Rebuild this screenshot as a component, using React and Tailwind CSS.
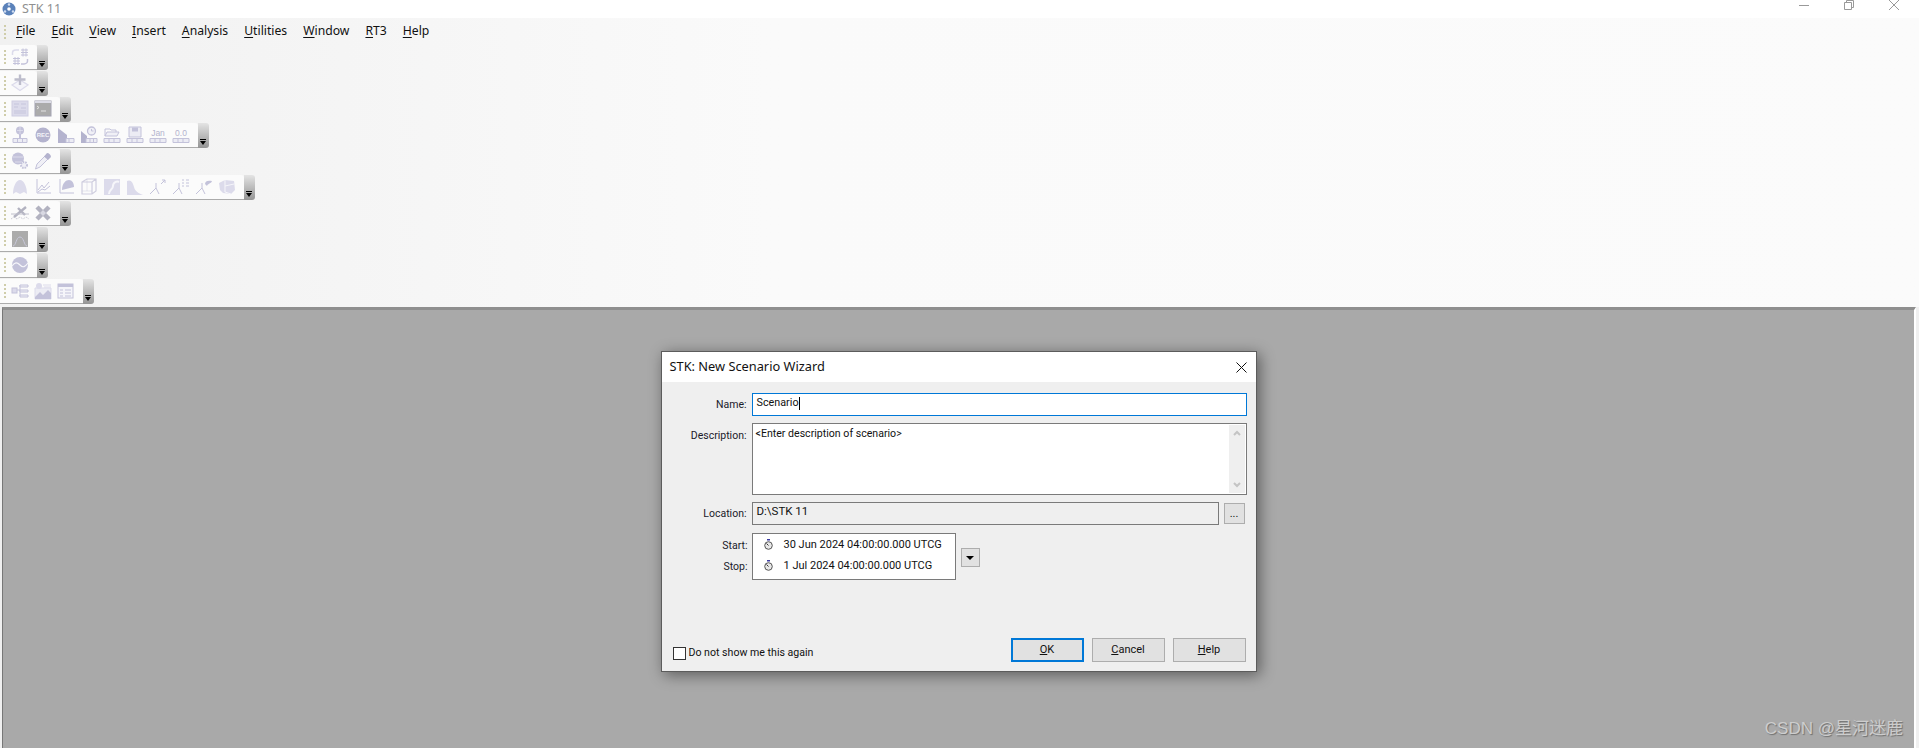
import React from 'react';

const MENUS = [
  ['F', 'ile'], ['E', 'dit'], ['V', 'iew'], ['I', 'nsert'], ['A', 'nalysis'],
  ['U', 'tilities'], ['W', 'indow'], ['R', 'T3'], ['H', 'elp'],
];

const C = '#c3c2da';
const D = '#dcdbeb';
const G = '#b4b3ce';

// toolbar glyphs, all drawn disabled
const ICONS = {
  swap: <g><path d="M1.5 7V4.5C1.5 3 3 2 5 2h3" fill="none" stroke={D} strokeWidth="1.5" /><path d="M16.5 11v2c0 1.500-1.500 3-3.500 3H10" fill="none" stroke={C} strokeWidth="1.500" /><path d="M10 2h7M10 4.500h7M10 7h7M12 0.500v8M15 0.500v8M2 10.500h7M2 13h7M2 15.500h7M4 9v8M7 9v8" stroke={C} /></g>,
  add: <g><path d="M1 11l8-5 8 5-8 5.500z" fill="#f5f5fa" stroke={D} strokeWidth="1.300" /><path d="M9 0.500v10.500M3.500 5.500h11" stroke="#bdbdcc" strokeWidth="2.400" /></g>,
  report: <g><rect x="1" y="1" width="16" height="15" fill={D} stroke="#cfcee2" /><path d="M3 4h5M3 7h4M10 4h5M10 8h5M3 11h12M3 13h12" stroke="#c6c5dc" /></g>,
  terminal: <g><rect x="1" y="1" width="16" height="15" fill="#ababab" stroke="#a4a4b4" /><rect x="1" y="1" width="16" height="2" fill="#dcdce6" /><path d="M3 6l2 1.500-2 1.500M7 11h5" stroke="#e4e4e4" fill="none" /></g>,
  station: <g><circle cx="9" cy="4.500" r="4" fill={C} /><path d="M6 4.500h6M9 1v7" stroke="#e4e4f0" strokeWidth="0.700" /><path d="M9 8v4" stroke={C} strokeWidth="2" /><path d="M2 12.500h14v4H2zM6.500 12.500v4M11.500 12.500v4" fill="#ececf4" stroke={C} /></g>,
  rec: <g><circle cx="9" cy="9" r="7.500" fill={G} /><text x="9" y="11" textAnchor="middle" fontSize="6" fontWeight="700" fill="#f4f4f8" fontFamily="Liberation Sans, sans-serif">REC</text></g>,
  play: <g><path d="M1 2l9 7v8H1z" fill={G} /><path d="M9 12.500h8v4H9zM12 12.500v4" fill="#ececf4" stroke={C} /></g>,
  clock: <g><path d="M1 5l6 5v7H1z" fill={G} /><circle cx="11.500" cy="5" r="4" fill="#f0f0f6" stroke={C} strokeWidth="1.300" /><path d="M11.500 3v2h2" stroke={C} fill="none" /><path d="M6 12.500h11v4H6zM10 12.500v4M13.500 12.500v4" fill="#ececf4" stroke={C} /></g>,
  folder: <g><path d="M2 10V3h5l1 1h5v2" fill="none" stroke={C} /><path d="M2 10l2-4h12l-2 4z" fill="#f0f0f6" stroke={C} /><path d="M1 12.500h16v4H1zM6 12.500v4M11 12.500v4" fill="#ececf4" stroke={C} /></g>,
  disk: <g><path d="M3 1h12v10H3z" fill="#ececf4" stroke={C} /><path d="M6 1.500h6v4H6z" fill={C} /><path d="M1 12.500h16v4H1zM6 12.500v4M11 12.500v4" fill="#ececf4" stroke={C} /></g>,
  jan: <g><text x="9" y="9.500" textAnchor="middle" fontSize="8.500" fill={G} fontFamily="Liberation Sans, sans-serif">Jan</text><path d="M1 12.500h16v4H1zM6 12.500v4M11 12.500v4" fill="#ececf4" stroke={C} /></g>,
  zero: <g><text x="9" y="9.500" textAnchor="middle" fontSize="8.500" fill={G} fontFamily="Liberation Sans, sans-serif">0.0</text><path d="M1 12.500h16v4H1zM6 12.500v4M11 12.500v4" fill="#ececf4" stroke={C} /></g>,
  gear: <g><circle cx="7" cy="6.500" r="6" fill={C} /><path d="M2 5h10M4 10h7" stroke={D} /><circle cx="13" cy="13" r="3" fill="#f0f0f6" stroke={C} strokeWidth="2" strokeDasharray="1.500 1" /></g>,
  pencil: <g><path d="M1.500 17l1.500-5 8-8 3 3-8 8z" fill="#f0f0f6" stroke={C} /><path d="M10 4.500l3-3.500c2 0 4 2 4 4l-3 3z" fill={G} /></g>,
  dome: <g><path d="M2 16C2 9 5 2 9 2s7 7 7 14l-3-2-4 2-4-2z" fill={D} /></g>,
  graph: <g fill="none" stroke={C}><path d="M3 1v14h14" /><path d="M4 12l4-5 2 3 5-6M4 14l4-3 3 1 5-4" /></g>,
  graphDome: <g><path d="M5 12C5 5 9 2 12 2s5 3 5 7z" fill={C} /><path d="M3 1v14h14" stroke={C} fill="none" /></g>,
  cube: <g fill="none" stroke="#cfcedf" strokeWidth="1.200"><path d="M2 4l5-3h9v12l-4 3H2zM2 4h10v12M12 4l4-3" /><path d="M7 1v12H2M7 13h5" strokeWidth="0.500" /></g>,
  map: <g><rect x="1" y="1" width="16" height="16" fill={D} /><path d="M6 16c0-5 4-4 4-8s4-5 6-4" stroke="#f6f6fa" fill="none" strokeWidth="2" /></g>,
  bell: <g><path d="M1 17V3c4-2 6 2 7 6s4 6 9 8z" fill={D} /></g>,
  angle1: <g fill="none" stroke={C}><path d="M1 16l6-6 3 6M7 10V5" /><path d="M12 6l4-4M13 2h3v3" /></g>,
  angle2: <g fill="none" stroke={C}><path d="M1 16l6-6 3 6M7 10V5" /><path d="M10 2h2M14 2h3M10 5h2M14 5h3M10 8h2M14 8h3" /></g>,
  angle3: <g><path d="M1 16l6-6 3 6M7 10V5" fill="none" stroke={C} /><path d="M10 6c0-3 3-4 7-3-1 3-4 2-5 5z" fill={C} /></g>,
  book: <g><path d="M1 5l6-3 9 1 1 9-4 4-8-1-3-3z" fill={D} /><path d="M7 2v12l6 2M7 8l9-2" stroke="#f6f6fa" fill="none" /></g>,
  satWave: <g><path d="M3 13L15 3M7 4l7 7" stroke="#b2b2c0" strokeWidth="2.400" /><path d="M0 10h18" stroke="#c0c0cc" /><path d="M0 15l3-2 3 2 3-2 3 2 3-2 3 2" stroke="#c0c0cc" fill="none" strokeDasharray="1 1" /></g>,
  sat: <g><path d="M3 3l12 12M15 3L3 15" stroke="#b2b2c0" strokeWidth="4.500" /><path d="M9 6l3 3-3 3-3-3z" fill="#d8d8e2" /></g>,
  chart: <g><rect x="1" y="1" width="16" height="16" fill="#ababab" /><path d="M2 16c3 0 3-9 7-9s4 9 7 9" stroke="#c8c8da" fill="none" /></g>,
  wave: <g><circle cx="9" cy="9" r="8" fill={C} /><path d="M1 10c3-4 5-4 8-1s5 2 8-2" stroke="#f6f6fa" fill="none" strokeWidth="1.200" /></g>,
  tree: <g fill="none" stroke={C}><rect x="1" y="6" width="5" height="5" fill={D} /><path d="M6 8h3M9 3v11" /><path d="M9 3h8v2H9zM9 8h8v2H9zM9 13h8v2H9z" fill="#f0f0f6" /></g>,
  image: <g><path d="M1 6h16v11H1z" fill="#ececf4" stroke={D} /><circle cx="5" cy="4" r="3" fill={D} /><path d="M1 15l5-5 3 3 5-5 3 3v6H1z" fill={C} /><path d="M9 3h8M10 5h7" stroke={D} /></g>,
  table: <g><rect x="1" y="2" width="15" height="14" fill="#f5f5fa" stroke={C} /><rect x="1" y="2" width="15" height="3" fill={C} /><path d="M3 8h3M8 8h6M3 11h3M8 11h6M3 14h3M8 14h6" stroke={C} /></g>,
};

const BARS = [
  ['swap'],
  ['add'],
  ['report', 'terminal'],
  ['station', 'rec', 'play', 'clock', 'folder', 'disk', 'jan', 'zero'],
  ['gear', 'pencil'],
  ['dome', 'graph', 'graphDome', 'cube', 'map', 'bell', 'angle1', 'angle2', 'angle3', 'book'],
  ['satWave', 'sat'],
  ['chart'],
  ['wave'],
  ['tree', 'image', 'table'],
];

function Grip({ className }) {
  return (
    <div className={`flex flex-col gap-[2px] shrink-0 ${className}`}>
      {[0, 1, 2, 3].map(i => <span key={i} className="block w-[2px] h-[2px] bg-[#cfcdaa]" />)}
    </div>
  );
}

function Toolbar({ icons }) {
  return (
    <div className="flex h-[25px]">
      <div className="flex items-center pl-[4px] pr-[3px] bg-[#fbfbfb] rounded-tr-[3px] border-b border-[#ababab]">
        <Grip className="mr-[5px]" />
        <div className="flex gap-[5px] pr-[5px]">
          {icons.map(name => (
            <svg key={name} width="18" height="18" viewBox="0 0 18 18">{ICONS[name]}</svg>
          ))}
        </div>
      </div>
      <div className="relative w-[11px] rounded-r-[3px] bg-gradient-to-b from-[#e4e4e4] to-[#959595]">
        <div className="absolute left-[2px] bottom-[3px] flex flex-col items-center">
          <span className="block w-[6px] h-px bg-black mb-px" />
          <span className="block w-0 h-0 border-x-[3px] border-x-transparent border-t-[4px] border-t-black" />
        </div>
      </div>
    </div>
  );
}

function Label({ children, className = '' }) {
  return <div className={`text-right text-[10.500px] text-[#1a1a2a] ${className}`}>{children}</div>;
}

function Stopwatch() {
  return (
    <svg width="9" height="11" viewBox="0 0 9 11" className="shrink-0">
      <rect x="3" y="0" width="3" height="1.500" fill="#3c3ca0" />
      <circle cx="4.500" cy="6.500" r="3.800" fill="#e8e8e8" stroke="#555" />
      <path d="M4.500 6.500L2.500 4.500" stroke="#333" />
    </svg>
  );
}

function DialogButton({ u, rest, primary }) {
  return (
    <button className={`w-[73px] h-[24px] bg-[#e1e1e1] text-[#111] ${primary ? 'border-2 border-[#0078d7]' : 'border border-[#adadad]'}`}>
      <span className="underline underline-offset-1">{u}</span>{rest}
    </button>
  );
}

function Dialog() {
  return (
    <div className="w-[596px] h-[321px] flex flex-col bg-[#efefef] border border-[#5c5c5c] shadow-[3px_3px_14px_rgba(0,0,0,0.45)] text-[11px] font-['Roboto',sans-serif]">
      <div className="h-[30px] shrink-0 bg-white flex items-center justify-between pl-[8px] pr-[9px]">
        <span className="text-[12.800px] text-[#111] font-['Noto_Sans',sans-serif]">STK: New Scenario Wizard</span>
        <svg width="11" height="11" viewBox="0 0 11 11"><path d="M0.500 0.500l10 10M10.500 0.500l-10 10" stroke="#111" /></svg>
      </div>
      <div className="flex-1 flex flex-col pl-[12px] pr-[9px] pt-[11px] pb-[9px]">
        <div className="flex items-center h-[23px]">
          <Label className="w-[73px] pt-[1px]">Name:</Label>
          <div className="ml-[5px] flex-1 h-full bg-white border border-[#0078d7] flex items-center pl-[4px] pb-[2px] text-[10.800px] text-[#111]">
            Scenario<span className="inline-block w-px h-[13px] bg-black" />
          </div>
        </div>
        <div className="flex h-[72px] mt-[7px]">
          <Label className="w-[73px] pt-[5px]">Description:</Label>
          <div className="ml-[5px] flex-1 bg-white border border-[#7a7a7a] flex justify-between pl-[3px] text-[#111] relative">
            <span className="pt-[2px] text-[10.600px]">&lt;Enter description of scenario&gt;</span>
            <div className="w-[16px] my-px mr-px bg-[#efefef] flex flex-col justify-between items-center py-[5px]">
              <svg width="8" height="6" viewBox="0 0 8 6"><path d="M1 5l3-3 3 3" stroke="#c4c4c4" strokeWidth="2" fill="none" /></svg>
              <svg width="8" height="6" viewBox="0 0 8 6"><path d="M1 1l3 3 3-3" stroke="#c4c4c4" strokeWidth="2" fill="none" /></svg>
            </div>
          </div>
        </div>
        <div className="flex items-center h-[23px] mt-[7px]">
          <Label className="w-[73px] pt-[1px]">Location:</Label>
          <div className="ml-[5px] w-[467px] h-full bg-[#efefef] border border-[#7a7a7a] flex items-center pl-[4px] pb-[3px] text-[11.500px] text-[#111]">D:\STK 11</div>
          <button className="ml-[5px] w-[21px] h-[21px] bg-[#e1e1e1] border border-[#adadad] leading-none text-[#111]">...</button>
        </div>
        <div className="flex mt-[8px]">
          <div className="w-[74px] pt-[2px] leading-[21px]">
            <Label>Start:</Label>
            <Label>Stop:</Label>
          </div>
          <div className="ml-[4px] w-[204px] h-[47px] bg-white border border-[#7a7a7a] pl-[11px] text-[#111] leading-[21px]">
            <div className="flex items-center gap-[11px]"><Stopwatch />30 Jun 2024 04:00:00.000 UTCG</div>
            <div className="flex items-center gap-[11px]"><Stopwatch />1 Jul 2024 04:00:00.000 UTCG</div>
          </div>
          <button className="ml-[5px] mt-[15px] w-[19px] h-[19px] bg-[#e1e1e1] border border-[#adadad] flex items-center justify-center">
            <span className="block w-0 h-0 border-x-[4px] border-x-transparent border-t-[4px] border-t-black" />
          </button>
        </div>
        <div className="mt-auto flex items-end justify-between">
          <label className="flex items-center gap-[3px] -ml-px pb-[1px] text-[10.600px] text-[#111]">
            <span className="block w-[13px] h-[13px] bg-white border border-[#333]" />
            Do not show me this again
          </label>
          <div className="flex gap-[8px] pr-px">
            <DialogButton u="O" rest="K" primary />
            <DialogButton u="C" rest="ancel" />
            <DialogButton u="H" rest="elp" />
          </div>
        </div>
      </div>
    </div>
  );
}

export default function App() {
  return (
    <div className="w-[1919px] h-[748px] flex flex-col overflow-hidden bg-white font-['Noto_Sans',sans-serif]">
      {/* Title bar */}
      <div className="h-[18px] shrink-0 bg-white flex items-start justify-between">
        <div className="flex items-center pl-[2px]">
          <svg width="14" height="14" viewBox="0 0 14 14">
            <circle cx="7" cy="7" r="6.500" fill="#5b82ba" />
            <circle cx="7" cy="7" r="1.800" fill="#fff" />
            <circle cx="7" cy="2.500" r="1.200" fill="#cfdcf0" />
            <circle cx="3" cy="9.500" r="1.200" fill="#cfdcf0" />
            <circle cx="11" cy="9.500" r="1.200" fill="#cfdcf0" />
          </svg>
          <span className="ml-[6px] text-[12.500px] leading-[17px] text-[#909090]">STK 11</span>
        </div>
        <div className="flex items-center gap-[35px] pr-[20px] h-[10px]">
          <span className="block w-[10px] h-px bg-[#999]" />
          <svg width="10" height="10" viewBox="0 0 10 10" fill="none" stroke="#999"><path d="M0.500 2.500h7v7h-7zM2.500 2.500v-2h7v7h-2" /></svg>
          <svg width="10" height="10" viewBox="0 0 10 10"><path d="M0 0l10 10M10 0L0 10" stroke="#999" /></svg>
        </div>
      </div>

      {/* Menu and docked toolbars */}
      <div className="h-[289px] shrink-0 bg-gradient-to-r from-[#f1f1f1] via-[#fafafa] via-40% to-[#fbfbfb]">
        <div className="h-[27px] flex items-center pl-[4px]">
          <Grip className="mr-[10px]" />
          <div className="flex gap-[16px] text-[12.200px] text-[#111]">
            {MENUS.map(([u, rest]) => (
              <span key={u}><span className="underline underline-offset-2">{u}</span>{rest}</span>
            ))}
          </div>
        </div>
        <div className="flex flex-col items-start gap-px">
          {BARS.map((icons, i) => <Toolbar key={i} icons={icons} />)}
        </div>
      </div>

      {/* MDI client */}
      <div className="flex-1 relative bg-[#f0f0f0] pl-[2px] pr-[3px]">
        <div className="h-full border-t-[3px] border-t-[#8f8f8f] border-l border-l-[#777] border-r-2 border-r-white bg-[#a9a9a9] flex justify-center pt-[41px]">
          <Dialog />
        </div>
        <span className="absolute right-[16px] bottom-[7px] text-[17px] text-[#cdcdcd] [text-shadow:1px_1px_1px_#6f6f6f] font-['Liberation_Sans','Noto_Sans_CJK_SC',sans-serif]">CSDN @星河迷鹿</span>
      </div>
    </div>
  );
}
